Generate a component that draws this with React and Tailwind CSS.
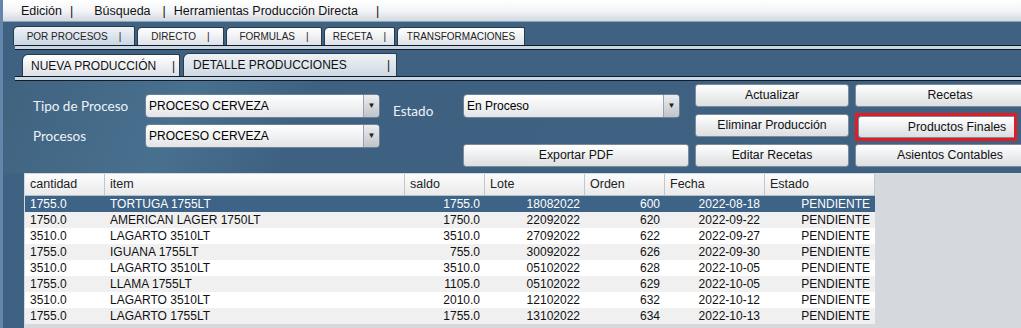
import React from 'react'

const rows = [
    ['1755.0', 'TORTUGA 1755LT', '1755.0', '18082022', '600', '2022-08-18', 'PENDIENTE'],
    ['1750.0', 'AMERICAN LAGER 1750LT', '1750.0', '22092022', '620', '2022-09-22', 'PENDIENTE'],
    ['3510.0', 'LAGARTO 3510LT', '3510.0', '27092022', '622', '2022-09-27', 'PENDIENTE'],
    ['1755.0', 'IGUANA 1755LT', '755.0', '30092022', '626', '2022-09-30', 'PENDIENTE'],
    ['3510.0', 'LAGARTO 3510LT', '3510.0', '05102022', '628', '2022-10-05', 'PENDIENTE'],
    ['1755.0', 'LLAMA 1755LT', '1105.0', '05102022', '629', '2022-10-05', 'PENDIENTE'],
    ['3510.0', 'LAGARTO 3510LT', '2010.0', '12102022', '632', '2022-10-12', 'PENDIENTE'],
    ['1755.0', 'LAGARTO 1755LT', '1755.0', '13102022', '634', '2022-10-13', 'PENDIENTE'],
]

const cols = [
    {name: 'cantidad', w: 'w-[80px]', right: false},
    {name: 'item', w: 'w-[300px]', right: false},
    {name: 'saldo', w: 'w-[80px]', right: true},
    {name: 'Lote', w: 'w-[100px]', right: true},
    {name: 'Orden', w: 'w-[80px]', right: true},
    {name: 'Fecha', w: 'w-[100px]', right: true},
    {name: 'Estado', w: 'w-[110px]', right: true},
]

const topTabs = [
    {label: 'POR PROCESOS', w: 'w-[122px]', active: true},
    {label: 'DIRECTO', w: 'w-[87px]'},
    {label: 'FORMULAS', w: 'w-[96px]'},
    {label: 'RECETA', w: 'w-[71px]'},
    {label: 'TRANSFORMACIONES', w: 'w-[128px]', noBar: true},
]

const Divider = () => (
    <div className="ml-[12px] h-[5px] shrink-0 border-t border-b border-[#101c28] bg-[#c9d6e3]"></div>
)

const Combo = ({text, w}) => (
    <div className={`${w} shrink-0 h-[24px] flex items-stretch rounded-[4px] border border-[#6f8193] bg-gradient-to-b from-[#ffffff] to-[#e2e4e7] overflow-hidden`}>
        <div className="flex-1 flex items-center pl-[3px] text-[12px] text-black">{text}</div>
        <div className="w-[16px] flex items-center justify-center border-l border-[#9aa2ab] bg-gradient-to-b from-[#eceef0] to-[#bfc4ca] text-[8px] text-[#222]">▼</div>
    </div>
)

const Btn = ({text, w = 'w-[154px]', h = 'h-[23px]'}) => (
    <div className={`${w} ${h} shrink-0 flex items-center justify-center rounded-[3px] border border-[#7d8a97] bg-gradient-to-b from-[#ffffff] to-[#dcdee1] text-[12.3px] text-[#111]`}>
        {text}
    </div>
)

const App = () => {
    return (
        <div className="w-[1021px] h-[328px] overflow-hidden flex flex-col bg-[#3f6282] font-['Liberation_Sans',Arial,sans-serif] border-l-[3px] border-[#6287aa]">
            {/* menu */}
            <div className="h-[22px] shrink-0 -ml-[3px] flex items-center pt-[1px] text-[12.5px] text-[#111] bg-gradient-to-b from-[#ffffff] via-[#f4f5f7] to-[#d3d9e0] border-b border-[#8fa3b6]">
                <span className="ml-[21px]">Edición</span>
                <span className="ml-[8px]">|</span>
                <span className="ml-[21px]">Búsqueda</span>
                <span className="ml-[12px]">|</span>
                <span className="ml-[8px]">Herramientas Producción Directa</span>
                <span className="ml-[18px]">|</span>
            </div>

            {/* top tabs */}
            <div className="h-[23px] shrink-0 flex items-end pl-[10px] gap-[2px]">
                {topTabs.map(tab => (
                    <div key={tab.label}
                        className={`${tab.w} shrink-0 flex items-center justify-center gap-[11px] rounded-tl-[5px] rounded-tr-[2px] border border-b-0 border-[#2b3a48] text-[10px] text-[#222] ${tab.active ? 'h-[19px] bg-gradient-to-b from-[#eef3f8] to-[#c9d6e3]' : 'h-[18px] bg-gradient-to-b from-[#ffffff] to-[#dfe3e8]'}`}>
                        <span>{tab.label}</span>
                        {!tab.noBar && <span>|</span>}
                    </div>
                ))}
            </div>
            <Divider />

            {/* second tabs */}
            <div className="h-[26px] shrink-0 flex items-end pl-[19px] gap-[3px]">
                <div className="w-[158px] shrink-0 h-[22px] flex items-center justify-between pl-[8px] pr-[4px] rounded-tl-[6px] rounded-tr-[2px] border border-b-0 border-[#2b3a48] bg-gradient-to-b from-[#ffffff] to-[#dde2e8] text-[12px] text-[#111]">
                    <span>NUEVA PRODUCCIÓN</span>
                    <span>|</span>
                </div>
                <div className="w-[214px] shrink-0 h-[23px] flex items-center justify-between pl-[9px] pr-[6px] rounded-tl-[6px] rounded-tr-[2px] border border-b-0 border-[#2b3a48] bg-gradient-to-b from-[#eef2f6] to-[#cfd9e3] text-[12px] text-[#111]">
                    <span>DETALLE PRODUCCIONES</span>
                    <span>|</span>
                </div>
            </div>
            <Divider />

            {/* form */}
            <div className="h-[92px] shrink-0 flex pl-[30px] bg-[linear-gradient(115deg,#40637f_0%,#48708f_18%,#3e6181_30%,#3f6282_100%)]">
                <div className="w-[112px] shrink-0 mt-[13px] flex flex-col gap-[6px] font-['Lato',sans-serif] text-[13.5px] text-[#eef3f8]">
                    <div className="h-[24px] flex items-center">Tipo de Proceso</div>
                    <div className="h-[24px] flex items-center">Procesos</div>
                </div>
                <div className="mt-[13px] shrink-0 flex flex-col gap-[6px]">
                    <Combo text="PROCESO CERVEZA" w="w-[235px]" />
                    <Combo text="PROCESO CERVEZA" w="w-[235px]" />
                </div>
                <div className="w-[70px] shrink-0 ml-[13px] mt-[21px] h-[18px] flex items-center font-['Lato',sans-serif] text-[13.5px] text-[#eef3f8]">Estado</div>
                <div className="flex shrink-0 flex-col">
                    <div className="mt-[13px]">
                        <Combo text="En Proceso" w="w-[217px]" />
                    </div>
                    <div className="mt-[26px]">
                        <Btn text="Exportar PDF" w="w-[226px]" />
                    </div>
                </div>
                <div className="ml-[6px] shrink-0 mt-[3px] flex flex-col gap-[7px]">
                    <Btn text="Actualizar" />
                    <Btn text="Eliminar Producción" />
                    <Btn text="Editar Recetas" />
                </div>
                <div className="ml-[6px] shrink-0 mt-[3px] flex flex-col">
                    <Btn text="Recetas" w="w-[190px]" />
                    <div className="mt-[6px] w-[162px] h-[28px] border-[3px] border-[#e31c23] flex overflow-hidden">
                        <Btn text="Productos Finales" w="w-[198px]" h="h-full" />
                    </div>
                    <div className="mt-[3px]">
                        <Btn text="Asientos Contables" w="w-[190px]" />
                    </div>
                </div>
            </div>

            {/* table */}
            <div className="flex-1 ml-[21px] pt-[1px] pl-[1px] bg-[#d5d9de]">
                <div className="w-[850px]">
                    <div className="h-[22px] flex border-b border-[#b9bec4] bg-gradient-to-b from-[#fcfcfc] to-[#e9eaec]">
                        {cols.map(c => (
                            <div key={c.name} className={`${c.w} shrink-0 flex items-center pl-[5px] border-r border-[#c3c7cc] text-[12.5px] text-[#222]`}>{c.name}</div>
                        ))}
                    </div>
                    {rows.map((r, i) => (
                        <div key={i} className={`h-[16px] flex text-[12px] ${i === 0 ? 'bg-[#3d6387] text-white' : i % 2 === 1 ? 'bg-[#f0f0f0] text-[#111]' : 'bg-white text-[#111]'}`}>
                            {r.map((v, j) => (
                                <div key={j} className={`${cols[j].w} shrink-0 flex items-center ${cols[j].right ? 'justify-end pr-[5px]' : 'pl-[5px]'}`}>{v}</div>
                            ))}
                        </div>
                    ))}
                </div>
            </div>
        </div>
    )
}

export default App
